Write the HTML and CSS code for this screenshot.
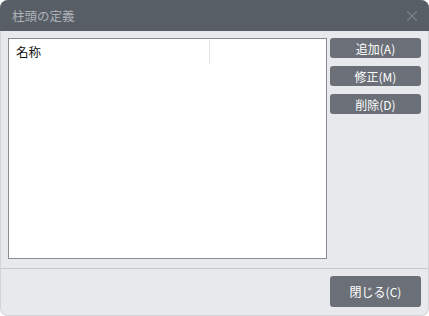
FILE: index.html
```html
<!DOCTYPE html>
<html lang="ja">
<head>
    <meta charset="UTF-8">
    <meta name="viewport" content="width=device-width, initial-scale=1.0">
    <title>柱頭の定義</title>
    <link rel="stylesheet" href="styles.css">
</head>
<body>

    <div class="window">
        <div class="titlebar">
            <span class="title">柱頭の定義</span>
            <svg class="close-icon" width="12" height="12" viewBox="0 0 12 12">
                <path d="M1 1 L11 11 M11 1 L1 11" stroke="#7b8088" stroke-width="1.1" fill="none"/>
            </svg>
        </div>

        <div class="content">
            <div class="list">
                <div class="list-head">
                    <div class="col-name">名称</div>
                    <div class="col-rest"></div>
                </div>
            </div>
            <div class="buttons">
                <button class="btn">追加(A)</button>
                <button class="btn">修正(M)</button>
                <button class="btn">削除(D)</button>
            </div>
        </div>

        <div class="footer">
            <button class="btn btn-close">閉じる(C)</button>
        </div>
    </div>

</body>
</html>
```

FILE: styles.css
```css
body {
    margin: 0;
    background-color: #ffffff;
    font-family: "Noto Sans CJK JP", "Noto Sans", sans-serif;
}

.window {
    width: 429px;
    height: 316px;
    display: flex;
    flex-direction: column;
    background-color: #e8e9ed;
    border-radius: 8px;
    overflow: hidden;
    box-sizing: border-box;
    box-shadow: inset 0 0 0 1px #d2d4d8;
}

.titlebar {
    height: 31px;
    flex-shrink: 0;
    display: flex;
    align-items: center;
    justify-content: space-between;
    padding: 0 11px 0 12px;
    background-color: #585e66;
}

.title {
    font-size: 12.5px;
    color: #aeb2b7;
}

.content {
    display: flex;
    gap: 3px;
    padding: 7px 8px 0 8px;
}

.list {
    width: 319px;
    height: 221px;
    box-sizing: border-box;
    border: 1px solid #878c93;
    background-color: white;
}

.list-head {
    display: flex;
    height: 25px;
    padding-top: 1px;
    box-sizing: border-box;
}

.col-name {
    width: 201px;
    padding-left: 7px;
    box-sizing: border-box;
    border-right: 1px solid #e2e2e2;
    font-size: 12.5px;
    line-height: 24px;
    color: #111;
}

.buttons {
    display: flex;
    flex-direction: column;
    gap: 8px;
}

.btn {
    width: 91px;
    height: 20px;
    padding: 0;
    border: none;
    border-radius: 3px;
    background-color: #6b7078;
    color: white;
    font-family: "Noto Sans CJK JP", "Noto Sans", sans-serif;
    font-size: 12px;
    cursor: pointer;
}

.btn:hover {
    background-color: #5d6269;
}

.footer {
    display: flex;
    justify-content: flex-end;
    margin: 9px 1px 0 1px;
    padding: 7px 7px 0 0;
    border-top: 1px solid #c4c7cb;
}

.btn-close {
    height: 31px;
}
```
